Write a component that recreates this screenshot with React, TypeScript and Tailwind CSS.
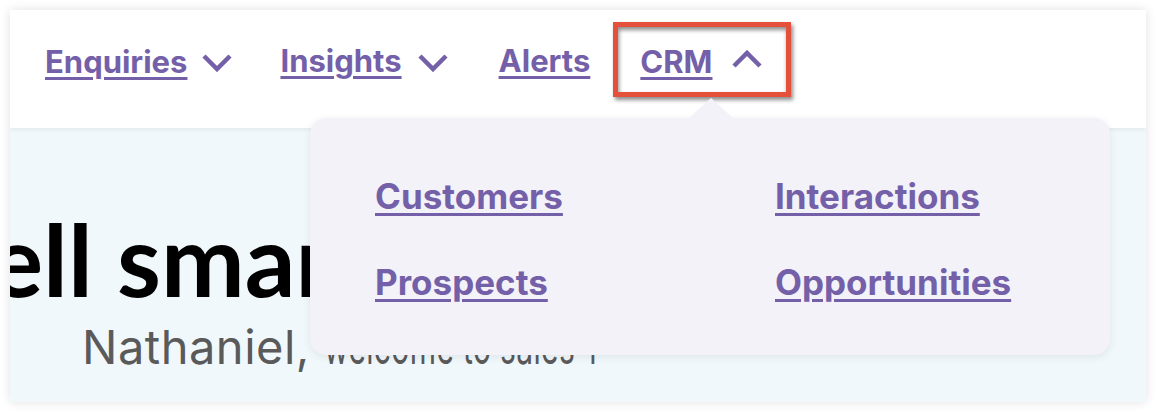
import { ReactNode } from 'react'

const Chevron = ({ up = false }: { up?: boolean }) => (
  <svg width="32" height="20" viewBox="0 0 32 20" className="shrink-0">
    <polyline
      points={up ? '3,16 16,3 29,16' : '3,4 16,17 29,4'}
      fill="none"
      stroke="#7460a8"
      strokeWidth="4.5"
    />
  </svg>
)

const NavLink = ({ children }: { children: ReactNode }) => (
  <a className="font-['Inter',sans-serif] text-[31px] font-bold text-[#7460a8] underline decoration-[3px] underline-offset-[4px] leading-none">
    {children}
  </a>
)

const MenuLink = ({ children }: { children: ReactNode }) => (
  <a className="font-['Inter',sans-serif] text-[35px] font-bold text-[#7460a8] underline decoration-[3px] underline-offset-[4px] leading-none">
    {children}
  </a>
)

export default function App() {
  return (
    <div className="w-[1156px] h-[412px] bg-white p-[10px] font-['Lato',sans-serif]">
      <div className="relative h-full overflow-hidden bg-[#f1f8fc] shadow-[0_0_10px_rgba(0,0,0,0.12)]">
        {/* Top nav */}
        <header className="relative z-10 h-[118px] bg-white shadow-[0_2px_4px_rgba(0,0,0,0.06)] flex items-start pl-[35px] pt-[12px]">
          <div className="flex items-center h-[75px] pt-[4px]">
            <NavLink>Enquiries</NavLink>
            <span className="ml-[14px]">
              <Chevron />
            </span>
            <span className="ml-[47px]">
              <NavLink>Insights</NavLink>
            </span>
            <span className="ml-[15px]">
              <Chevron />
            </span>
            <span className="ml-[50px]">
              <NavLink>Alerts</NavLink>
            </span>
            <div className="ml-[23px] -mt-[4px] h-[75px] flex items-center pt-[4px] border-[5px] border-[#e4503a] pl-[22px] pr-[23px] shadow-[2px_3px_4px_rgba(0,0,0,0.45),inset_1px_3px_4px_rgba(0,0,0,0.45)]">
              <NavLink>CRM</NavLink>
              <span className="ml-[18px] -mt-[4px]">
                <Chevron up />
              </span>
            </div>
          </div>
        </header>

        {/* Hero */}
        <main className="pt-[80px]">
          <h1 className="ml-[-75px] text-[100px] font-bold leading-none text-black whitespace-nowrap">
            Sell smarter
          </h1>
          <p className="ml-[72px] mt-[15px] font-['Inter',sans-serif] text-[47px] tracking-[0.5px] leading-none text-[#5a5a5a] whitespace-nowrap">
            Nathaniel,{' '}
            <span className="inline-block origin-left scale-x-[0.64]">welcome to sales-i</span>
          </p>
        </main>

        {/* CRM dropdown */}
        <div className="absolute z-20 left-[300px] top-[108px] w-[800px] h-[237px] rounded-[16px] bg-[#f3f2f8] shadow-[0_2px_8px_rgba(0,0,0,0.08)]">
          <svg width="46" height="21" viewBox="0 0 46 21" className="absolute left-[378px] top-[-20px]">
            <polygon points="0,21 23,0 46,21" fill="#f3f2f8" />
          </svg>
          <div className="grid grid-cols-[400px_1fr] pl-[65px] pt-[61px] gap-y-[50px]">
            <div>
              <MenuLink>Customers</MenuLink>
            </div>
            <div>
              <MenuLink>Interactions</MenuLink>
            </div>
            <div>
              <MenuLink>Prospects</MenuLink>
            </div>
            <div>
              <MenuLink>Opportunities</MenuLink>
            </div>
          </div>
        </div>
      </div>
    </div>
  )
}
